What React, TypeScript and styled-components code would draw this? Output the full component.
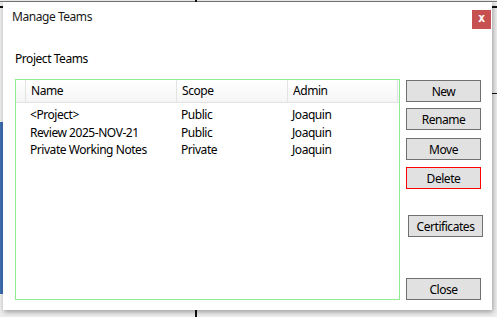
import { createGlobalStyle } from "styled-components";
import styled from "styled-components";

type Team = { name: string; scope: string; admin: string };

const teams: Team[] = [
  { name: "<Project>", scope: "Public", admin: "Joaquin" },
  { name: "Review 2025-NOV-21", scope: "Public", admin: "Joaquin" },
  { name: "Private Working Notes", scope: "Private", admin: "Joaquin" },
];

export default function App() {
  return (
    <>
      <GlobalStyle />
      <Desktop>
        <Dialog>
          <TitleBar>
            <Title>Manage Teams</Title>
            <CloseX>x</CloseX>
          </TitleBar>
          <Body>
            <Label>Project Teams</Label>
            <Main>
              <Grid>
                <HeaderRow>
                  <HeaderCell $w={10} />
                  <HeaderCell $w={151}>Name</HeaderCell>
                  <HeaderCell $w={111}>Scope</HeaderCell>
                  <HeaderCell $w={110}>Admin</HeaderCell>
                </HeaderRow>
                <Rows>
                  {teams.map((t) => (
                    <Row key={t.name}>
                      <Cell $w={10} />
                      <Cell $w={151}>{t.name}</Cell>
                      <Cell $w={111}>{t.scope}</Cell>
                      <Cell $w={110}>{t.admin}</Cell>
                    </Row>
                  ))}
                </Rows>
              </Grid>
              <Buttons>
                <Button $top={1}>New</Button>
                <Button $top={6}>Rename</Button>
                <Button $top={8}>Move</Button>
                <Button $top={7} $danger>
                  Delete
                </Button>
                <Button $top={26} $shift={2}>
                  Certificates
                </Button>
                <Button $top={41}>Close</Button>
              </Buttons>
            </Main>
          </Body>
        </Dialog>
      </Desktop>
    </>
  );
}

const GlobalStyle = createGlobalStyle`
  body {
    margin: 0;
    font-family: "Noto Sans", "Open Sans", sans-serif;
    font-size: 12px;
    letter-spacing: -0.45px;
    color: #000;
  }
`;

const Desktop = styled.div`
  width: 497px;
  height: 317px;
  overflow: hidden;
  box-sizing: border-box;
  padding: 2px 0 0 3px;
  background-color: #ededed;
  background-image:
    linear-gradient(#3f6db0, #3f6db0),
    linear-gradient(#111, #111),
    linear-gradient(#111, #111),
    linear-gradient(#111, #111),
    linear-gradient(#111, #111),
    linear-gradient(#111, #111),
    linear-gradient(#7a7a7a, #7a7a7a);
  background-size: 3px 172px, 2px 3px, 2px 8px, 3px 2px, 6px 2px, 6px 1px, 100% 1px;
  background-position: 0 122px, 195px 0, 195px 310px, 0 6px, 491px 6px, 491px 93px, 0 1px;
  background-repeat: no-repeat;
`;

const Dialog = styled.div`
  width: 489px;
  height: 308px;
  background: #fff;
  box-shadow: 1px 2px 5px rgba(0, 0, 0, 0.35);
  display: flex;
  flex-direction: column;
`;

const TitleBar = styled.div`
  height: 30px;
  display: flex;
  align-items: flex-start;
  justify-content: space-between;
  padding: 0 1px 0 9px;
`;

const Title = styled.span`
  font-size: 12px;
  line-height: 16px;
  margin-top: 7px;
  color: #1a1a1a;
`;

const CloseX = styled.div`
  width: 19px;
  height: 19px;
  margin-top: 8px;
  background: #c75050;
  color: #fff;
  font-family: "DejaVu Sans Mono", monospace;
  font-weight: bold;
  font-size: 12px;
  letter-spacing: 0;
  line-height: 17px;
  text-align: center;
`;

const Body = styled.div`
  padding: 19px 0 0 12px;
  display: flex;
  flex-direction: column;
`;

const Label = styled.div`
  line-height: 16px;
  height: 16px;
  margin-bottom: 12px;
`;

const Main = styled.div`
  display: flex;
  gap: 6px;
`;

const Grid = styled.div`
  width: 385px;
  height: 221px;
  box-sizing: border-box;
  border: 1px solid #90ee90;
  display: flex;
  flex-direction: column;
`;

const HeaderRow = styled.div`
  display: flex;
  height: 23px;
  box-sizing: border-box;
  border-bottom: 1px solid #e3e3e3;
  background: linear-gradient(#ffffff, #f5f5f5);
`;

const HeaderCell = styled.div<{ $w: number }>`
  width: ${(p) => p.$w}px;
  box-sizing: border-box;
  border-right: 1px solid #e3e3e3;
  padding-left: 5px;
  line-height: 22px;
  white-space: nowrap;
`;

const Rows = styled.div`
  padding-top: 3px;
  display: flex;
  flex-direction: column;
`;

const Row = styled.div`
  display: flex;
  height: 17.5px;
`;

const Cell = styled.div<{ $w: number }>`
  width: ${(p) => p.$w}px;
  box-sizing: border-box;
  padding-left: 4px;
  line-height: 17.5px;
  white-space: nowrap;
`;

const Buttons = styled.div`
  display: flex;
  flex-direction: column;
  align-items: flex-start;
`;

const Button = styled.button<{ $top: number; $danger?: boolean; $shift?: number }>`
  width: 75px;
  height: 22px;
  margin-top: ${(p) => p.$top}px;
  margin-left: ${(p) => p.$shift ?? 0}px;
  padding: 0;
  background: #e1e1e1;
  border: 1px solid ${(p) => (p.$danger ? "#ff0000" : "#707070")};
  border-radius: 0;
  font-family: "Noto Sans", "Open Sans", sans-serif;
  font-size: 12px;
  letter-spacing: -0.45px;
  color: #000;
`;
